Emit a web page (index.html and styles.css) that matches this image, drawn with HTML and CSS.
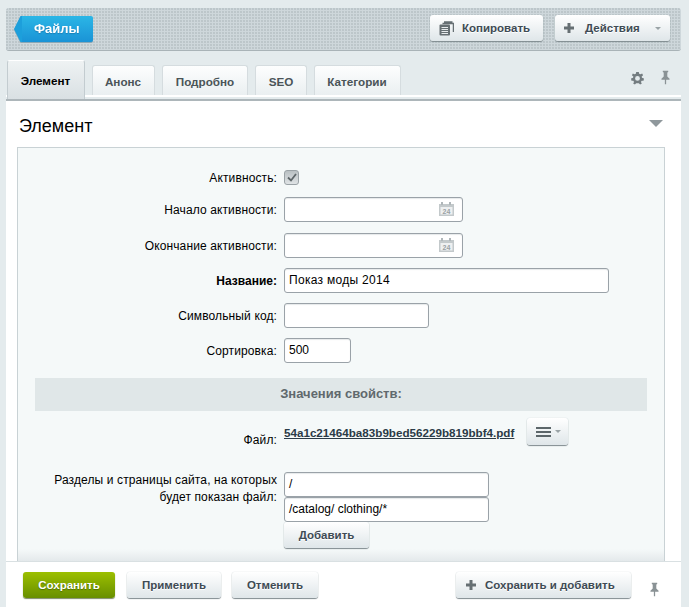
FILE: index.html
```html
<!DOCTYPE html>
<html lang="ru">
<head>
<meta charset="utf-8">
<title>Элемент</title>
<link rel="stylesheet" href="styles.css">
</head>
<body>
<div class="page">
  <header class="toolbar">
    <a class="back"><svg class="back-tip" width="8" height="26" viewBox="0 0 8 26"><path d="M8 0V26H6.500L0 13L6.500 0Z" fill="#1d9fdb"/></svg><span class="back-label">Файлы</span></a>
    <div class="toolbar-actions">
      <button class="btn btn-copy"><svg class="ico" width="15" height="15" viewBox="0 0 15 15"><path d="M5 1H13.500M3.500 2.500H14.500V11" fill="none" stroke="#666f73" stroke-width="1.500"/><rect x="0.500" y="3.500" width="10.500" height="11" rx="1" fill="#666f73"/><path d="M2.500 6.500H9M2.500 8.500H9M2.500 10.500H9M2.500 12.500H9" stroke="#e6eaec"/></svg>Копировать</button>
      <button class="btn btn-actions"><svg class="ico" width="10" height="10" viewBox="0 0 10 10"><path d="M3.500 0H6.500V3.500H10V6.500H6.500V10H3.500V6.500H0V3.500H3.500Z" fill="#666f73"/></svg><span class="actions-label">Действия</span><span class="caret-sm"></span></button>
    </div>
  </header>

  <nav class="tabs">
    <a class="tab tab-active">Элемент</a>
    <a class="tab tab-a">Анонс</a>
    <a class="tab tab-b">Подробно</a>
    <a class="tab tab-c">SEO</a>
    <a class="tab tab-d">Категории</a>
    <div class="tab-tools">
      <svg class="gear" width="13" height="13" viewBox="0 0 14 14"><path fill="#737c80" fill-rule="evenodd" d="M5.600 0H8.400L8.800 1.900L10.300 2.500L12 1.500L13 3.500L11.500 4.800L11.800 6.200L14 7L13.500 9.500L11.500 9.500L10.700 10.800L11.700 12.500L9.800 13.500L8.400 12.200H5.600L4.200 13.500L2.300 12.500L3.300 10.800L2.500 9.500L.5 9.500L0 7L2.200 6.200L2.500 4.800L1 3.500L2 1.500L3.700 2.500L5.200 1.900ZM7 4.300A2.600 2.600 0 1 0 7 9.500A2.600 2.600 0 1 0 7 4.300Z"/></svg>
      <svg class="pin" width="9" height="15" viewBox="0 0 10 15"><path fill="#8a9295" d="M2 0H8V1.500L7 2V6.500L9.500 9V10H5.700V15H4.300V10H.5V9L3 6.500V2L2 1.500Z"/></svg>
    </div>
  </nav>

  <main class="content">
    <div class="section-head">
      <h1 class="section-title">Элемент</h1>
      <span class="collapse"></span>
    </div>
    <section class="box">
      <div class="row row-check">
        <label class="lbl">Активность:</label>
        <span class="check"><svg width="10" height="9" viewBox="0 0 10 9"><path d="M1 4.500L4 7.500L9 1" fill="none" stroke="#5d6669" stroke-width="1.800"/></svg></span>
      </div>
      <div class="row">
        <label class="lbl">Начало активности:</label>
        <div class="input w-date"><svg class="cal" width="15" height="14" viewBox="0 0 15 14"><rect x="0" y="2" width="15" height="12" fill="#c3c9cb"/><rect x="1.500" y="5" width="12" height="7.500" fill="#eef0f1"/><path d="M3 0V3M11 0V3" stroke="#b0b7ba" stroke-width="2"/><text class="cal-num" x="7.500" y="11.500">24</text></svg></div>
      </div>
      <div class="row">
        <label class="lbl">Окончание активности:</label>
        <div class="input w-date"><svg class="cal" width="15" height="14" viewBox="0 0 15 14"><rect x="0" y="2" width="15" height="12" fill="#c3c9cb"/><rect x="1.500" y="5" width="12" height="7.500" fill="#eef0f1"/><path d="M3 0V3M11 0V3" stroke="#b0b7ba" stroke-width="2"/><text class="cal-num" x="7.500" y="11.500">24</text></svg></div>
      </div>
      <div class="row">
        <label class="lbl lbl-strong">Название:</label>
        <div class="input w-name">Показ моды 2014</div>
      </div>
      <div class="row">
        <label class="lbl">Символьный код:</label>
        <div class="input w-code"></div>
      </div>
      <div class="row">
        <label class="lbl">Сортировка:</label>
        <div class="input w-sort">500</div>
      </div>
      <div class="band">Значения свойств:</div>
      <div class="row row-file">
        <label class="lbl lbl-file">Файл:</label>
        <a class="file-link">54a1c21464ba83b9bed56229b819bbf4.pdf</a>
        <button class="btn btn-menu"><svg width="15" height="10" viewBox="0 0 15 10"><path d="M0 1H15M0 5H15M0 9H15" stroke="#5c666a" stroke-width="2"/></svg><span class="caret-sm caret-menu"></span></button>
      </div>
      <div class="row row-sites">
        <label class="lbl lbl-sites">Разделы и страницы сайта, на которых будет показан файл:</label>
        <div class="site-list">
          <div class="input w-site">/</div>
          <div class="input w-site">/catalog/ clothing/*</div>
          <button class="btn btn-add">Добавить</button>
        </div>
      </div>
    </section>
  </main>

  <footer class="footer">
    <button class="btn btn-save">Сохранить</button>
    <button class="btn btn-apply">Применить</button>
    <button class="btn btn-cancel">Отменить</button>
    <button class="btn btn-more"><svg class="ico" width="10" height="10" viewBox="0 0 10 10"><path d="M3.500 0H6.500V3.500H10V6.500H6.500V10H3.500V6.500H0V3.500H3.500Z" fill="#666f73"/></svg>Сохранить и добавить</button>
    <svg class="pin-foot" width="9" height="15" viewBox="0 0 10 15"><path fill="#8a9295" d="M2 0H8V1.500L7 2V6.500L9.500 9V10H5.700V15H4.300V10H.5V9L3 6.500V2L2 1.500Z"/></svg>
  </footer>
</div>
</body>
</html>
```
FILE: styles.css
```css
* { box-sizing: border-box; }
html, body { margin: 0; height: 100%; }
body {
  overflow: hidden;
  background: #e4ebed;
  font-family: "Liberation Sans", Arial, sans-serif;
  font-size: 12px;
  color: #000;
}
.page { width: 689px; height: 607px; padding: 8px 8px 0 6px; display: flex; flex-direction: column; overflow: hidden; }

.toolbar {
  height: 43px;
  flex: none;
  display: flex;
  align-items: flex-start;
  justify-content: space-between;
  padding: 7px 11px 0 8px;
  border-radius: 3px;
  border-bottom: 1px solid #a9b3b7;
  background-color: #ced7db;
  background-image: radial-gradient(circle at 1px 1px, #bcc6ca 0.7px, transparent 1px);
  background-size: 3px 3px;
}
.back { display: flex; height: 26px; margin-top: 1px; filter: drop-shadow(0 1px 0 #8aa7b5); }
.back-tip { flex: none; height: 26px; }
.back-label {
  width: 71px;
  height: 26px;
  padding-left: 12px;
  line-height: 26px;
  font-size: 13px;
  font-weight: bold;
  color: #fff;
  border-radius: 0 2px 2px 0;
  background: linear-gradient(#2bb6e6, #1a93d6);
  text-shadow: 0 1px 1px #1b7fb6;
}
.toolbar-actions { display: flex; gap: 12px; }

.btn {
  display: inline-flex;
  align-items: center;
  height: 26px;
  padding: 0;
  border: 0;
  border-radius: 3px;
  font-family: inherit;
  font-size: 11.5px;
  font-weight: bold;
  color: #3f4b54;
  background: linear-gradient(#fff, #dfe6e9);
  box-shadow: 0 1px 1px #7f8a8e, 0 0 1px #b3bcc0;
  text-shadow: 0 1px 0 #fff;
}
.btn-copy { width: 113px; padding-left: 9px; }
.btn-copy .ico { margin-right: 8px; }
.btn-actions { width: 115px; padding-left: 9px; }
.btn-actions .ico { margin-right: 11px; }
.actions-label { width: 70px; text-align: left; }
.caret-sm { width: 0; height: 0; border: 3px solid transparent; border-top: 3px solid #9aa3a6; border-bottom: 0; }

.tabs {
  height: 41px;
  margin-top: 9px;
  flex: none;
  display: flex;
  align-items: flex-end;
  gap: 7px;
  padding-left: 1px;
  position: relative;
  border-bottom: 2px solid #adb6ba;
  background: linear-gradient(#fff, #fff) 0 35px / 100% 2px no-repeat;
}
.tab {
  height: 30px;
  margin-bottom: 4px;
  text-align: center;
  font-size: 11.7px;
  line-height: 31px;
  font-weight: bold;
  color: #4a5458;
  border: 1px solid #d5dcdf;
  border-bottom: 0;
  border-radius: 3px 3px 0 0;
  background: linear-gradient(#fdfefe, #eaeff1);
}
.tab-active {
  width: 78px;
  height: 39px;
  margin-bottom: 0;
  padding-right: 1px;
  line-height: 40px;
  color: #000;
  border-color: #c3ccd0;
  border-top-color: #fff;
  background: linear-gradient(#eef2f3, #d9e0e3);
}
.tab-a { width: 63px; padding-right: 1px; }
.tab-b { width: 86px; }
.tab-c { width: 52px; }
.tab-d { width: 87px; padding-right: 1px; }
.tab-tools { position: absolute; right: 11px; top: 10px; display: flex; align-items: flex-start; gap: 17px; }
.gear { margin-top: 2px; }

.content { flex: 1; background: #fff; padding: 0 16px 0 11px; display: flex; flex-direction: column; min-height: 0; }
.section-head { height: 46px; flex: none; display: flex; align-items: center; justify-content: space-between; padding: 3px 2px 0 2px; }
.section-title { margin: 0; font-size: 18px; font-weight: normal; line-height: 22px; }
.collapse { width: 0; height: 0; border: 7px solid transparent; border-top: 7px solid #8f989c; border-bottom: 0; margin-top: -5px; }

.box {
  flex: 1;
  width: 648px;
  border: 1px solid #c9d2d5;
  border-bottom: 0;
  padding: 22px 17px 0 17px;
  background: linear-gradient(#f5f9f9 0, #f5f9f9 calc(100% - 12px), #e4e9eb 100%);
  min-height: 0;
}
.row { display: flex; align-items: center; min-height: 25px; margin-bottom: 10px; }
.row-check { min-height: 15px; margin-bottom: 12px; }
.row-check + .row { margin-bottom: 11px; }
.lbl { width: 242px; flex: none; margin-right: 7px; text-align: right; font-size: 12px; letter-spacing: .12px; }
.lbl-strong { font-weight: bold; letter-spacing: 0; }
.input {
  height: 25px;
  border: 1px solid #9aa2a8;
  border-radius: 3px;
  background: #fff;
  box-shadow: inset 0 1px 1px #e6e9ea;
  padding-left: 4px;
  font-size: 12px;
  line-height: 23px;
  color: #000;
  position: relative;
}
.w-date { width: 179px; }
.w-name { width: 325px; letter-spacing: .3px; }
.w-code { width: 145px; }
.w-sort { width: 67px; }
.w-site { width: 205px; height: 25px; }
.cal { position: absolute; right: 8px; top: 4px; }
.cal-num { font-family: "Liberation Sans", sans-serif; font-size: 7px; font-weight: bold; fill: #9aa1a4; text-anchor: middle; }
.check {
  width: 15px;
  height: 15px;
  display: flex;
  align-items: center;
  justify-content: center;
  border-radius: 3px;
  border: 1px solid #9aa2a6;
  background: linear-gradient(#b9c0c3, #dfe3e5);
}
.band {
  height: 33px;
  margin: 15px 0 7px;
  background: #e0e7e8;
  text-align: center;
  line-height: 31px;
  font-size: 13px;
  font-weight: bold;
  color: #60696d;
}
.row-file { align-items: flex-start; height: 54px; margin-bottom: 0; }
.lbl-file { padding-top: 15px; }
.file-link { margin-top: 7px; font-size: 11.65px; line-height: 15px; font-weight: bold; color: #2b3b47; text-decoration: underline; white-space: nowrap; width: 243px; flex: none; }
.btn-menu { width: 41px; height: 27px; padding-left: 9px; }
.caret-menu { margin-left: 4px; }
.row-sites { align-items: flex-start; margin-bottom: 0; }
.lbl-sites { line-height: 17px; text-align: right; }
.site-list { display: flex; flex-direction: column; }
.btn-add { width: 85px; height: 26px; justify-content: center; margin-top: 0; }

.footer {
  height: 46px;
  flex: none;
  background: #fff;
  display: flex;
  align-items: flex-start;
  padding: 10px 0 0 17px;
  border-top: 1px solid #d9e0e2;
}
.footer .btn { height: 26px; justify-content: center; }
.btn-save { width: 92px; color: #fff; text-shadow: 0 1px 1px #4f6f00; background: linear-gradient(#9cbf00, #688f00); box-shadow: 0 1px 1px #7e8a6a; }
.btn-apply { width: 94px; margin-left: 12px; }
.btn-cancel { width: 86px; margin-left: 11px; }
.footer .btn-more { width: 175px; margin-left: 138px; justify-content: flex-start; padding-left: 10px; }
.btn-more .ico { margin-right: 9px; }
.pin-foot { margin: 10px 0 0 19px; }
```
